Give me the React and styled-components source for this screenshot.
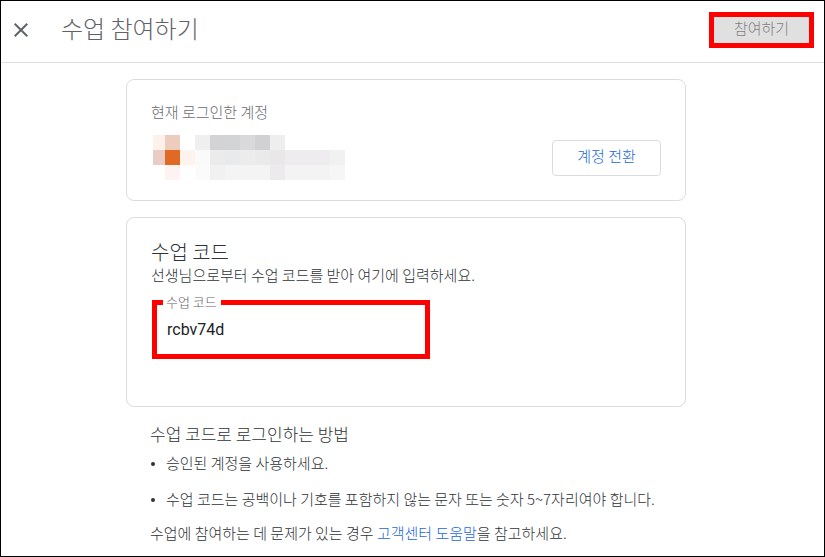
import React, { useState } from 'react';
import styled, { createGlobalStyle } from 'styled-components';

const Colours = {
    TEXT: '#303337',
    MUTED: '#5f6368',
    LABEL: '#6a6c70',
    BORDER: '#dadce0',
    LINK: '#1a66e0',
    HIGHLIGHT: '#ff0000',
}

//blurred account block, each row is [x, width, colour]
const accountMosaic = [
    [
        [2, 12, '#fdf1ec'], [14, 15, '#eeccbd'], [44, 15, '#efeff0'], [59, 15, '#d3d3d5'], [74, 15, '#d2d4d5'],
        [89, 15, '#d9d8da'], [104, 15, '#d1d0d2'], [119, 15, '#eeeeef'],
    ],
    [
        [2, 12, '#eaccc4'], [14, 15, '#e06924'], [29, 15, '#fef3ed'], [44, 15, '#fafafa'], [59, 15, '#ebebec'],
        [74, 15, '#e9eaeb'], [89, 15, '#ececec'], [104, 15, '#ebeaeb'], [119, 15, '#e9e7e8'],
        [134, 45, '#eeecee'], [179, 15, '#f2f1f2'],
    ],
    [
        [14, 15, '#fcf3f2'], [44, 15, '#fbfbfb'], [59, 15, '#f1f1f2'], [74, 45, '#f5f4f5'],
        [119, 15, '#eceaec'], [134, 45, '#f4f3f4'], [179, 15, '#f7f6f7'],
    ],
]

const App = () => {
    const [code, setCode] = useState('rcbv74d')

    return (
        <Page>
            <GlobalStyle />
            <Header>
                <CloseButton type="button" aria-label="닫기">
                    <svg width="14" height="14" viewBox="0 0 14 14" fill="none" stroke="currentColor" strokeWidth="2">
                        <path d="M0.7 0.7L13.3 13.3M13.3 0.7L0.7 13.3" />
                    </svg>
                </CloseButton>
                <Title>수업 참여하기</Title>
                <JoinButton type="button">참여하기</JoinButton>
            </Header>
            <Main>
                <AccountCard>
                    <CardLabel>현재 로그인한 계정</CardLabel>
                    <AccountRow>
                        <svg width="194" height="45" viewBox="0 0 194 45" shapeRendering="crispEdges" aria-hidden="true">
                            {accountMosaic.map((row, y) => row.map(([x, width, fill]) => (
                                <rect key={`${x}-${y}`} x={x} y={y * 15} width={width} height="15" fill={fill} />
                            )))}
                        </svg>
                        <SwitchButton type="button">계정 전환</SwitchButton>
                    </AccountRow>
                </AccountCard>
                <CodeCard>
                    <CardTitle>수업 코드</CardTitle>
                    <Text>선생님으로부터 수업 코드를 받아 여기에 입력하세요.</Text>
                    <Field>
                        <legend><label htmlFor="code">수업 코드</label></legend>
                        <input id="code" type="text" value={code} spellCheck="false" onChange={(e) => setCode(e.target.value)} />
                    </Field>
                </CodeCard>
                <Help>
                    <HelpTitle>수업 코드로 로그인하는 방법</HelpTitle>
                    <HelpList>
                        <li>승인된 계정을 사용하세요.</li>
                        <li>수업 코드는 공백이나 기호를 포함하지 않는 문자 또는 숫자 5~7자리여야 합니다.</li>
                    </HelpList>
                    <Text>수업에 참여하는 데 문제가 있는 경우 <HelpLink href="#help">고객센터 도움말</HelpLink>을 참고하세요.</Text>
                </Help>
            </Main>
        </Page>
    );
};

export default App;

const GlobalStyle = createGlobalStyle`
    * {
        box-sizing: border-box;
    }

    body {
        margin: 0;
        background: #fff;
        color: ${Colours.TEXT};
        font-family: "Noto Sans CJK KR", sans-serif;
        font-size: 15px;
        font-weight: 300;
        line-height: 22px;
    }

    button, input {
        font-family: inherit;
        font-size: inherit;
        font-weight: inherit;
    }

    h1, h2, h3, p, ul {
        margin: 0;
        padding: 0;
        font-weight: inherit;
    }

    svg {
        display: block;
    }
`;

const Page = styled.div`
    min-height: 100vh;
    border: 1px solid #000;
`;

const Header = styled.header`
    display: flex;
    align-items: center;
    height: 62px;
    padding: 0 10px 4px 8px;
    border-bottom: 1px solid #e0e0e0;
`;

const CloseButton = styled.button`
    padding: 5px;
    border: 0;
    background: none;
    color: ${Colours.MUTED};
    cursor: pointer;
`;

const Title = styled.h1`
    flex: 1;
    margin-left: 28px;
    padding-bottom: 4px;
    color: ${Colours.MUTED};
    font-size: 24px;
    line-height: 32px;
`;

const JoinButton = styled.button`
    width: 105px;
    height: 36px;
    padding: 0 0 4px;
    border: 5px solid ${Colours.HIGHLIGHT};
    background: #e0e0e0;
    color: #808080;
    line-height: 22px;
`;

const Main = styled.main`
    padding: 16px 13px 0 0;
`;

const Card = styled.section`
    max-width: 560px;
    margin: 0 auto 16px;
    border: 1px solid ${Colours.BORDER};
    border-radius: 8px;
`;

const AccountCard = styled(Card)`
    padding: 20px 24px;
`;

const CodeCard = styled(Card)`
    padding: 22px 24px 47px;
`;

const CardLabel = styled.p`
    color: ${Colours.LABEL};
    line-height: 24px;
`;

const AccountRow = styled.div`
    display: flex;
    align-items: center;
    justify-content: space-between;
    margin-top: 11px;
`;

const SwitchButton = styled.button`
    width: 109px;
    height: 36px;
    padding: 0 0 4px;
    border: 1px solid ${Colours.BORDER};
    border-radius: 4px;
    background: #fff;
    color: ${Colours.LINK};
    cursor: pointer;
`;

const CardTitle = styled.h2`
    font-size: 20px;
    line-height: 24px;
`;

const Text = styled.p`
    line-height: 22px;
`;

const Field = styled.fieldset`
    width: 278px;
    margin: 8px 0 0 1px;
    padding: 0 6px;
    border: 5px solid ${Colours.HIGHLIGHT};

    legend {
        padding: 0 4px 0 3px;
        color: ${Colours.MUTED};
        font-size: 13px;
        line-height: 16px;
    }

    input {
        display: block;
        width: 100%;
        height: 44px;
        padding: 0 4px 6px;
        border: 0;
        outline: none;
        background: none;
        color: #202124;
        font-family: Roboto, sans-serif;
        font-size: 16px;
        font-weight: 400;
    }
`;

const Help = styled.section`
    max-width: 560px;
    margin: -1px auto 0;
    padding: 0 0 10px 24px;
`;

const HelpTitle = styled.h3`
    font-size: 17px;
    line-height: 24px;
`;

const HelpList = styled.ul`
    padding-left: 16px;
    list-style: none;

    li {
        display: flex;
        align-items: center;
        margin: 6px 0 14px;
    }

    li::before {
        content: '';
        width: 4px;
        height: 4px;
        margin: 2px 11px 0 -15px;
        border-radius: 50%;
        background: ${Colours.TEXT};
    }

    li + li {
        margin-bottom: 12px;
    }
`;

const HelpLink = styled.a`
    color: ${Colours.LINK};
    text-decoration: none;
`;
